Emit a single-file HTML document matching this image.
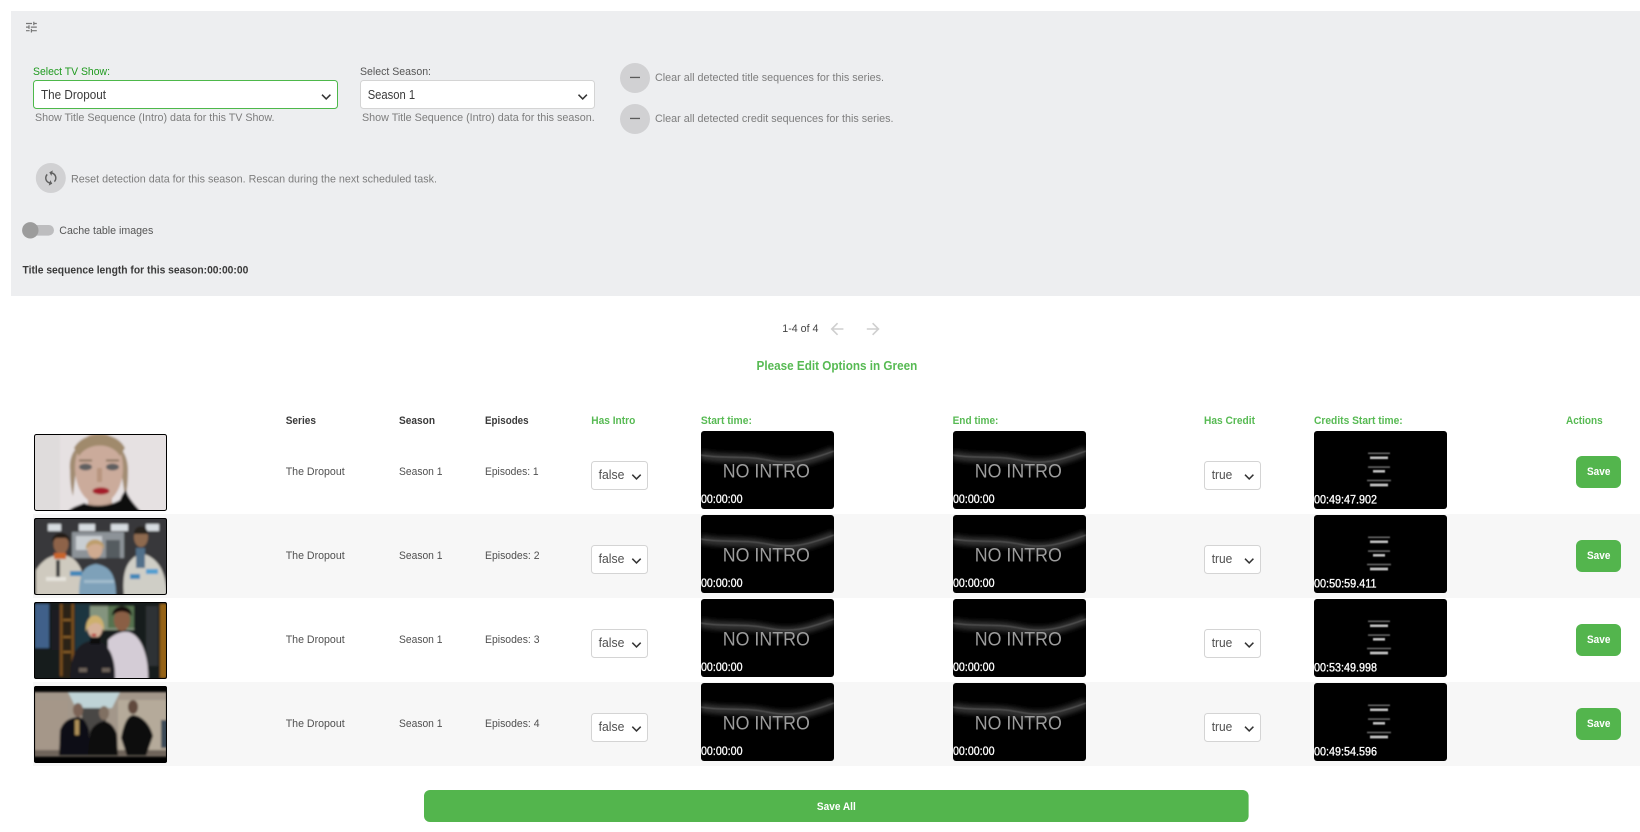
<!DOCTYPE html>
<html lang="en">
<head>
<meta charset="utf-8">
<title>Title Sequences</title>
<style>
html,body{margin:0;padding:0;background:#fff;width:1640px;height:832px;overflow:hidden}
svg{display:block}
text{font-family:"Liberation Sans",sans-serif;font-size:11px;fill:#444}
.h{font-weight:bold;fill:#3a3a3a;font-size:10.8px}
.g{font-weight:bold;fill:#57ba53;font-size:10.8px}
.help{fill:#7d7d7d;font-size:11px}
.td{fill:#505050;font-size:11px}
.sel{fill:#505050;font-size:12.5px}
.t{fill:#fff;font-size:11.5px;stroke:#fff;stroke-width:.3}
.ni{fill:#9c9c9c;font-size:19px;filter:url(#b4)}
.chev{fill:none;stroke:#333;stroke-width:1.5}
.box{fill:#fff;stroke:#d4d4d4;stroke-width:1}
.sv{fill:#fff;font-weight:bold;font-size:11px}
</style>
</head>
<body>
<svg width="1640" height="832" viewBox="0 0 1640 832" xmlns="http://www.w3.org/2000/svg">
<defs>
<filter id="b1" x="-10%" y="-10%" width="120%" height="120%"><feGaussianBlur stdDeviation="1.1"/></filter>
<filter id="b2" x="-10%" y="-100%" width="120%" height="300%"><feGaussianBlur stdDeviation="2.4"/></filter>
<filter id="b3" x="-10%" y="-50%" width="120%" height="200%"><feGaussianBlur stdDeviation=".55"/></filter>
<filter id="b4" x="-5%" y="-20%" width="110%" height="140%"><feGaussianBlur stdDeviation=".3"/></filter>
<clipPath id="c1"><rect x="34" y="434" width="133" height="77" rx="2"/></clipPath>
<clipPath id="c2"><rect x="34" y="518" width="133" height="77" rx="2"/></clipPath>
<clipPath id="c3"><rect x="34" y="602" width="133" height="77" rx="2"/></clipPath>
<clipPath id="c4"><rect x="34" y="686" width="133" height="77" rx="2"/></clipPath>
<clipPath id="cw"><rect width="133" height="78" rx="3"/></clipPath>
<symbol id="noin" width="133" height="78" viewBox="0 0 133 78">
  <rect width="133" height="78" rx="3" fill="#000"/>
  <g clip-path="url(#cw)">
    <path d="M0 24C20 29 42 25 66 30S106 31 133 20" fill="none" stroke="#303030" stroke-width="9" filter="url(#b2)"/>
    <path d="M0 24C20 28 42 24 66 29S106 30 133 20" fill="none" stroke="#5c5c5c" stroke-width="1" filter="url(#b3)"/>
  </g>
</symbol>
<symbol id="cred" width="133" height="78" viewBox="0 0 133 78">
  <rect width="133" height="78" rx="3" fill="#000"/>
  <g fill="#fff" filter="url(#b3)">
    <rect x="54" y="21.5" width="22" height="1.6" opacity=".4"/>
    <rect x="56" y="25.5" width="18" height="2.6" opacity=".75"/>
    <rect x="54" y="35.3" width="22" height="1.6" opacity=".4"/>
    <rect x="59" y="39" width="12" height="2.6" opacity=".75"/>
    <rect x="53" y="48.7" width="24" height="1.6" opacity=".4"/>
    <rect x="56" y="52.6" width="18" height="2.8" opacity=".75"/>
  </g>
</symbol>
</defs>

<rect width="1640" height="832" fill="#fff"/>
<!-- top panel -->
<rect x="11" y="11" width="1629" height="285" fill="#edeef0"/>
<path transform="translate(24.2 19.9) scale(.6)" fill="#777" d="M3 17v2h6v-2H3zM3 5v2h10V5H3zm10 16v-2h8v-2h-8v-2h-2v6h2zM7 9v2H3v2h4v2h2V9H7zm14 4v-2H11v2h10zm-6-4h2V7h4V5h-4V3h-2v6z"/>

<text x="33" y="75" style="fill:#1f9a1f" textLength="77" lengthAdjust="spacingAndGlyphs">Select TV Show:</text>
<rect x="33.5" y="80.5" width="304" height="28" rx="3" fill="#fff" stroke="#4db84a" stroke-width="1"/>
<text x="41" y="99" class="sel" style="fill:#3a3a3a" textLength="65" lengthAdjust="spacingAndGlyphs">The Dropout</text>
<path class="chev" d="M322 94.7l4.2 4.2 4.2-4.2"/>
<text x="35" y="121" class="help" textLength="239.5" lengthAdjust="spacingAndGlyphs">Show Title Sequence (Intro) data for this TV Show.</text>

<text x="360" y="75" style="fill:#555" textLength="71" lengthAdjust="spacingAndGlyphs">Select Season:</text>
<rect x="360.5" y="80.5" width="234" height="28" rx="3" class="box"/>
<text x="367.7" y="99" class="sel" style="fill:#3a3a3a" textLength="47.5" lengthAdjust="spacingAndGlyphs">Season 1</text>
<path class="chev" d="M578.5 94.7l4.2 4.2 4.2-4.2"/>
<text x="362" y="121" class="help" textLength="232.7" lengthAdjust="spacingAndGlyphs">Show Title Sequence (Intro) data for this season.</text>

<circle cx="635" cy="78" r="15" fill="#d1d1d3"/>
<rect x="630" y="76.8" width="10" height="1.3" fill="#5a5a5a"/>
<text x="655" y="81" class="help" textLength="229" lengthAdjust="spacingAndGlyphs">Clear all detected title sequences for this series.</text>
<circle cx="635" cy="119" r="15" fill="#d1d1d3"/>
<rect x="630" y="117.8" width="10" height="1.3" fill="#5a5a5a"/>
<text x="655" y="122" class="help" textLength="238.5" lengthAdjust="spacingAndGlyphs">Clear all detected credit sequences for this series.</text>

<circle cx="50.8" cy="178" r="15" fill="#d1d1d3"/>
<path transform="translate(50.8 178) rotate(15) scale(.72) translate(-12 -12)" fill="#5f5f5f" d="M12 4V1L8 5l4 4V6c3.31 0 6 2.69 6 6 0 1.01-.25 1.97-.7 2.8l1.46 1.46C19.54 15.03 20 13.57 20 12c0-4.42-3.58-8-8-8zm0 14c-3.31 0-6-2.69-6-6 0-1.01.25-1.97.7-2.8L5.24 7.74C4.46 8.97 4 10.43 4 12c0 4.42 3.58 8 8 8v3l4-4-4-4v3z"/>
<text x="71" y="182.3" class="help" textLength="366" lengthAdjust="spacingAndGlyphs">Reset detection data for this season. Rescan during the next scheduled task.</text>

<rect x="24" y="225" width="30" height="10.6" rx="5.3" fill="#bdbdbf"/>
<circle cx="30.3" cy="230.3" r="8.2" fill="#9c9c9c"/>
<text x="59.3" y="234" style="fill:#555" textLength="94" lengthAdjust="spacingAndGlyphs">Cache table images</text>
<text x="22.5" y="273.3" class="h" textLength="225.8" lengthAdjust="spacingAndGlyphs">Title sequence length for this season:00:00:00</text>

<!-- pagination -->
<text x="782.3" y="332" style="fill:#444" textLength="36.2" lengthAdjust="spacingAndGlyphs">1-4 of 4</text>
<path transform="translate(827.4 319.4) scale(.8)" fill="#cfcfcf" d="M20 11H7.83l5.59-5.59L12 4l-8 8 8 8 1.41-1.41L7.83 13H20v-2z"/>
<path transform="translate(863.6 319.4) scale(.8)" fill="#cfcfcf" d="M12 4l-1.41 1.41L16.17 11H4v2h12.17l-5.58 5.59L12 20l8-8z"/>
<text x="756.5" y="370" class="g" style="font-size:12.5px" textLength="160.8" lengthAdjust="spacingAndGlyphs">Please Edit Options in Green</text>

<!-- header -->
<text x="285.7" y="424" class="h" textLength="30.3" lengthAdjust="spacingAndGlyphs">Series</text>
<text x="399" y="424" class="h" textLength="36" lengthAdjust="spacingAndGlyphs">Season</text>
<text x="485" y="424" class="h" textLength="43.6" lengthAdjust="spacingAndGlyphs">Episodes</text>
<text x="591.3" y="424" class="g" textLength="44" lengthAdjust="spacingAndGlyphs">Has Intro</text>
<text x="700.9" y="424" class="g" textLength="51" lengthAdjust="spacingAndGlyphs">Start time:</text>
<text x="952.6" y="424" class="g" textLength="45.8" lengthAdjust="spacingAndGlyphs">End time:</text>
<text x="1204" y="424" class="g" textLength="51" lengthAdjust="spacingAndGlyphs">Has Credit</text>
<text x="1314" y="424" class="g" textLength="88.7" lengthAdjust="spacingAndGlyphs">Credits Start time:</text>
<text x="1566" y="424" class="g" textLength="36.7" lengthAdjust="spacingAndGlyphs">Actions</text>

<!-- bands -->
<rect x="33" y="514" width="1607" height="84" fill="#f7f7f7"/>
<rect x="33" y="682" width="1607" height="84" fill="#f7f7f7"/>

<!-- thumb 1 -->
<g clip-path="url(#c1)"><g filter="url(#b1)">
  <rect x="30" y="430" width="140" height="85" fill="#e6e1e2"/>
  <rect x="30" y="430" width="30" height="85" fill="#dfdcdc"/>
  <path d="M70 470C66 430 128 426 128 470C128 482 127 492 125 496L121 470L76 470L73 496C71 490 70 480 70 470z" fill="#a28c72"/>
  <path d="M88 488h24v24H88z" fill="#c4a595"/>
  <ellipse cx="99" cy="468" rx="24" ry="36" fill="#cbab9b"/>
  <path d="M74 448C84 430 116 430 125 448L120 456C112 442 88 442 79 456z" fill="#a08a6c"/>
  <ellipse cx="85.5" cy="467" rx="6.5" ry="3.4" fill="#5e5e60"/>
  <ellipse cx="112.5" cy="467" rx="6.5" ry="3.4" fill="#5e5e60"/>
  <rect x="79" y="459.5" width="13" height="2" fill="#85705a"/>
  <rect x="106" y="459.5" width="13" height="2" fill="#85705a"/>
  <rect x="97" y="468" width="5" height="14" fill="#b8957f"/>
  <ellipse cx="101" cy="491" rx="8.5" ry="3.6" fill="#a51f2c"/>
  <path d="M66 514C70 507 78 506 84 503C92 507 108 507 120 500C122 495 124 492 126 490C128 498 134 504 143 514z" fill="#0e0e0e"/>
</g></g>
<rect x="34.5" y="434.5" width="132" height="76" rx="2" fill="none" stroke="#000"/>

<!-- thumb 2 -->
<g clip-path="url(#c2)"><g filter="url(#b1)">
  <rect x="30" y="515" width="140" height="85" fill="#39383a"/>
  <rect x="48" y="524" width="13" height="7" fill="#d7dce0"/>
  <rect x="79" y="524" width="16" height="7" fill="#d7dce0"/>
  <rect x="111" y="524" width="17" height="7" fill="#d7dce0"/>
  <rect x="146" y="524" width="13" height="7" fill="#d7dce0"/>
  <rect x="72" y="532" width="52" height="26" fill="#8d9398"/>
  <rect x="76" y="536" width="26" height="14" fill="#c9ced2"/>
  <rect x="106" y="540" width="14" height="18" fill="#555b60"/>
  <path d="M36 596V570C44 558 52 555 61 555C72 555 80 562 84 578V596z" fill="#cfcabf"/>
  <ellipse cx="61" cy="544" rx="7.5" ry="10" fill="#8e6448"/>
  <path d="M52 542C52 530 70 530 70 542L66 538H56z" fill="#231a15"/>
  <rect x="54" y="553" width="12" height="6" fill="#c9652a"/>
  <rect x="56" y="560" width="4" height="18" fill="#3b3b3b"/>
  <path d="M124 596C122 572 126 560 141 553C156 557 166 568 167 596z" fill="#cfceC6"/>
  <ellipse cx="141" cy="537" rx="7" ry="10" fill="#8e6a50"/>
  <path d="M134 534C134 524 148 524 148 534z" fill="#25201c"/>
  <rect x="136" y="548" width="9" height="20" fill="#51708a"/>
  <path d="M79 596C79 572 84 566 96 564C108 566 116 572 116 596z" fill="#7ea1b9"/>
  <ellipse cx="95" cy="549" rx="7.5" ry="9.5" fill="#d0ab90"/>
  <path d="M86 550C84 536 106 536 104 550C102 542 90 542 86 550z" fill="#bd9e6c"/>
  <rect x="46" y="577" width="20" height="4" fill="#e6e3dc"/>
  <rect x="70" y="571" width="12" height="5" fill="#3f87b8"/>
  <rect x="146" y="569" width="12" height="5" fill="#4f9fd0"/>
  <rect x="130" y="574" width="10" height="5" fill="#3f87b8"/>
  <rect x="84" y="580" width="30" height="3" fill="#a3bccd"/>
</g></g>
<rect x="34.5" y="518.5" width="132" height="76" rx="2" fill="none" stroke="#000"/>

<!-- thumb 3 -->
<g clip-path="url(#c3)"><g filter="url(#b1)">
  <rect x="30" y="600" width="140" height="82" fill="#191a1b"/>
  <rect x="35" y="604" width="14" height="44" fill="#3f618a"/>
  <rect x="52" y="610" width="8" height="40" fill="#1b1f24"/>
  <rect x="60" y="604" width="14" height="74" fill="#2c2216"/>
  <rect x="60" y="604" width="2.5" height="72" fill="#7a4f1e"/>
  <rect x="71.5" y="604" width="2.5" height="72" fill="#7a4f1e"/>
  <rect x="63" y="619" width="8" height="2" fill="#8a6026"/>
  <rect x="63" y="636" width="8" height="2" fill="#8a6026"/>
  <rect x="63" y="651" width="8" height="2" fill="#8a6026"/>
  <rect x="75" y="604" width="16" height="50" fill="#1a3641"/>
  <rect x="90" y="606" width="44" height="24" fill="#84947e"/>
  <rect x="108" y="606" width="26" height="22" fill="#56724f"/>
  <rect x="146" y="606" width="12" height="60" fill="#2e3234"/>
  <rect x="160" y="604" width="7" height="74" fill="#966318"/>
  <path d="M108 680V640C115 633 126 629 133 634C143 640 149 660 148 680z" fill="#d4ccd6"/>
  <ellipse cx="122" cy="620" rx="8" ry="11" fill="#8a5f44"/>
  <path d="M112 616C112 603 132 603 132 616C126 610 118 610 112 616z" fill="#141010"/>
  <path d="M70 680C70 652 78 642 95 640C108 642 116 656 115 680z" fill="#1e1f22"/>
  <ellipse cx="95" cy="628" rx="7.5" ry="10" fill="#d4b098"/>
  <path d="M86 632C84 610 106 610 104 632C102 620 90 620 86 632z" fill="#cdb06e"/>
  <rect x="90" y="637" width="10" height="7" fill="#0d0d0f"/>
  <ellipse cx="94" cy="635" rx="2.5" ry="1.2" fill="#b5202c"/>
  <rect x="79" y="668" width="8" height="4" fill="#8f7f72" opacity=".7"/>
  <rect x="102" y="668" width="8" height="4" fill="#8f7f72" opacity=".7"/>
</g></g>
<rect x="34.5" y="602.5" width="132" height="76" rx="2" fill="none" stroke="#000"/>

<!-- thumb 4 -->
<g clip-path="url(#c4)">
  <rect x="30" y="684" width="140" height="82" fill="#000"/>
  <g filter="url(#b1)">
  <rect x="34" y="692" width="133" height="64.5" fill="#a3978a"/>
  <path d="M68 692H120L112 708H76z" fill="#bfd3d6"/>
  <rect x="82" y="708" width="24" height="40" fill="#4a4744"/>
  <rect x="118" y="700" width="49" height="50" fill="#b5aa9a"/>
  <rect x="34" y="700" width="34" height="50" fill="#a59789"/>
  <rect x="34" y="750" width="133" height="6" fill="#6e645a"/>
  <path d="M59 756L60 730C64 720 70 718 78 717C84 718 86 722 89 730L90 756z" fill="#0f0f13"/>
  <ellipse cx="78" cy="710" rx="5" ry="7" fill="#7c6456"/>
  <rect x="75" y="720" width="4" height="15" fill="#b0925a"/>
  <path d="M88 756L90 732C94 724 100 722 104 721C110 722 114 726 117 734L118 756z" fill="#0c0c0f"/>
  <ellipse cx="104" cy="713" rx="5" ry="7" fill="#807062"/>
  <path d="M121 738C124 722 128 716 133 715C142 716 150 724 153 736L146 756H127z" fill="#0b0b0d"/>
  <ellipse cx="133" cy="707" rx="5" ry="7" fill="#604a3e"/>
  <rect x="161" y="720" width="6" height="28" fill="#3d4c58"/>
  </g>
</g>
<rect x="34.5" y="686.5" width="132" height="76" rx="2" fill="none" stroke="#000"/>

<!-- row 1 -->
<g>
  <text x="285.7" y="475" class="td" textLength="59" lengthAdjust="spacingAndGlyphs">The Dropout</text>
  <text x="399" y="475" class="td" textLength="43.5" lengthAdjust="spacingAndGlyphs">Season 1</text>
  <text x="485" y="475" class="td" textLength="53.6" lengthAdjust="spacingAndGlyphs">Episodes: 1</text>
  <rect x="591.5" y="461.5" width="56" height="28" rx="3" class="box"/>
  <text x="598.6" y="479" class="sel" textLength="25.8" lengthAdjust="spacingAndGlyphs">false</text>
  <path class="chev" d="M632.3 474.7l4.2 4.2 4.2-4.2"/>
  <use href="#noin" x="701" y="431"/>
  <text x="722.8" y="477.5" class="ni" textLength="87" lengthAdjust="spacingAndGlyphs">NO INTRO</text>
  <text x="701" y="503" class="t" textLength="41.5" lengthAdjust="spacingAndGlyphs">00:00:00</text>
  <use href="#noin" x="953" y="431"/>
  <text x="974.8" y="477.5" class="ni" textLength="87" lengthAdjust="spacingAndGlyphs">NO INTRO</text>
  <text x="953" y="503" class="t" textLength="41.5" lengthAdjust="spacingAndGlyphs">00:00:00</text>
  <rect x="1204.5" y="461.5" width="56" height="28" rx="3" class="box"/>
  <text x="1211.7" y="479" class="sel" textLength="20.6" lengthAdjust="spacingAndGlyphs">true</text>
  <path class="chev" d="M1245 474.7l4.2 4.2 4.2-4.2"/>
  <use href="#cred" x="1314" y="431"/>
  <text x="1314" y="503.3" class="t" textLength="63" lengthAdjust="spacingAndGlyphs">00:49:47.902</text>
  <rect x="1576" y="456" width="45" height="32" rx="6" fill="#53b54d"/>
  <text x="1587" y="475" class="sv" textLength="23.4" lengthAdjust="spacingAndGlyphs">Save</text>
</g>
<!-- row 2 -->
<g transform="translate(0 84)">
  <text x="285.7" y="475" class="td" textLength="59" lengthAdjust="spacingAndGlyphs">The Dropout</text>
  <text x="399" y="475" class="td" textLength="43.5" lengthAdjust="spacingAndGlyphs">Season 1</text>
  <text x="485" y="475" class="td" textLength="54.5" lengthAdjust="spacingAndGlyphs">Episodes: 2</text>
  <rect x="591.5" y="461.5" width="56" height="28" rx="3" class="box"/>
  <text x="598.6" y="479" class="sel" textLength="25.8" lengthAdjust="spacingAndGlyphs">false</text>
  <path class="chev" d="M632.3 474.7l4.2 4.2 4.2-4.2"/>
  <use href="#noin" x="701" y="431"/>
  <text x="722.8" y="477.5" class="ni" textLength="87" lengthAdjust="spacingAndGlyphs">NO INTRO</text>
  <text x="701" y="503" class="t" textLength="41.5" lengthAdjust="spacingAndGlyphs">00:00:00</text>
  <use href="#noin" x="953" y="431"/>
  <text x="974.8" y="477.5" class="ni" textLength="87" lengthAdjust="spacingAndGlyphs">NO INTRO</text>
  <text x="953" y="503" class="t" textLength="41.5" lengthAdjust="spacingAndGlyphs">00:00:00</text>
  <rect x="1204.5" y="461.5" width="56" height="28" rx="3" class="box"/>
  <text x="1211.7" y="479" class="sel" textLength="20.6" lengthAdjust="spacingAndGlyphs">true</text>
  <path class="chev" d="M1245 474.7l4.2 4.2 4.2-4.2"/>
  <use href="#cred" x="1314" y="431"/>
  <text x="1314" y="503.3" class="t" textLength="62.5" lengthAdjust="spacingAndGlyphs">00:50:59.411</text>
  <rect x="1576" y="456" width="45" height="32" rx="6" fill="#53b54d"/>
  <text x="1587" y="475" class="sv" textLength="23.4" lengthAdjust="spacingAndGlyphs">Save</text>
</g>
<!-- row 3 -->
<g transform="translate(0 168)">
  <text x="285.7" y="475" class="td" textLength="59" lengthAdjust="spacingAndGlyphs">The Dropout</text>
  <text x="399" y="475" class="td" textLength="43.5" lengthAdjust="spacingAndGlyphs">Season 1</text>
  <text x="485" y="475" class="td" textLength="54.5" lengthAdjust="spacingAndGlyphs">Episodes: 3</text>
  <rect x="591.5" y="461.5" width="56" height="28" rx="3" class="box"/>
  <text x="598.6" y="479" class="sel" textLength="25.8" lengthAdjust="spacingAndGlyphs">false</text>
  <path class="chev" d="M632.3 474.7l4.2 4.2 4.2-4.2"/>
  <use href="#noin" x="701" y="431"/>
  <text x="722.8" y="477.5" class="ni" textLength="87" lengthAdjust="spacingAndGlyphs">NO INTRO</text>
  <text x="701" y="503" class="t" textLength="41.5" lengthAdjust="spacingAndGlyphs">00:00:00</text>
  <use href="#noin" x="953" y="431"/>
  <text x="974.8" y="477.5" class="ni" textLength="87" lengthAdjust="spacingAndGlyphs">NO INTRO</text>
  <text x="953" y="503" class="t" textLength="41.5" lengthAdjust="spacingAndGlyphs">00:00:00</text>
  <rect x="1204.5" y="461.5" width="56" height="28" rx="3" class="box"/>
  <text x="1211.7" y="479" class="sel" textLength="20.6" lengthAdjust="spacingAndGlyphs">true</text>
  <path class="chev" d="M1245 474.7l4.2 4.2 4.2-4.2"/>
  <use href="#cred" x="1314" y="431"/>
  <text x="1314" y="503.3" class="t" textLength="63" lengthAdjust="spacingAndGlyphs">00:53:49.998</text>
  <rect x="1576" y="456" width="45" height="32" rx="6" fill="#53b54d"/>
  <text x="1587" y="475" class="sv" textLength="23.4" lengthAdjust="spacingAndGlyphs">Save</text>
</g>
<!-- row 4 -->
<g transform="translate(0 252)">
  <text x="285.7" y="475" class="td" textLength="59" lengthAdjust="spacingAndGlyphs">The Dropout</text>
  <text x="399" y="475" class="td" textLength="43.5" lengthAdjust="spacingAndGlyphs">Season 1</text>
  <text x="485" y="475" class="td" textLength="54.5" lengthAdjust="spacingAndGlyphs">Episodes: 4</text>
  <rect x="591.5" y="461.5" width="56" height="28" rx="3" class="box"/>
  <text x="598.6" y="479" class="sel" textLength="25.8" lengthAdjust="spacingAndGlyphs">false</text>
  <path class="chev" d="M632.3 474.7l4.2 4.2 4.2-4.2"/>
  <use href="#noin" x="701" y="431"/>
  <text x="722.8" y="477.5" class="ni" textLength="87" lengthAdjust="spacingAndGlyphs">NO INTRO</text>
  <text x="701" y="503" class="t" textLength="41.5" lengthAdjust="spacingAndGlyphs">00:00:00</text>
  <use href="#noin" x="953" y="431"/>
  <text x="974.8" y="477.5" class="ni" textLength="87" lengthAdjust="spacingAndGlyphs">NO INTRO</text>
  <text x="953" y="503" class="t" textLength="41.5" lengthAdjust="spacingAndGlyphs">00:00:00</text>
  <rect x="1204.5" y="461.5" width="56" height="28" rx="3" class="box"/>
  <text x="1211.7" y="479" class="sel" textLength="20.6" lengthAdjust="spacingAndGlyphs">true</text>
  <path class="chev" d="M1245 474.7l4.2 4.2 4.2-4.2"/>
  <use href="#cred" x="1314" y="431"/>
  <text x="1314" y="503.3" class="t" textLength="63" lengthAdjust="spacingAndGlyphs">00:49:54.596</text>
  <rect x="1576" y="456" width="45" height="32" rx="6" fill="#53b54d"/>
  <text x="1587" y="475" class="sv" textLength="23.4" lengthAdjust="spacingAndGlyphs">Save</text>
</g>

<!-- save all -->
<rect x="424" y="790" width="824.6" height="32" rx="6" fill="#53b54d"/>
<text x="816.9" y="810" class="sv" textLength="38.9" lengthAdjust="spacingAndGlyphs">Save All</text>
</svg>
</body>
</html>
